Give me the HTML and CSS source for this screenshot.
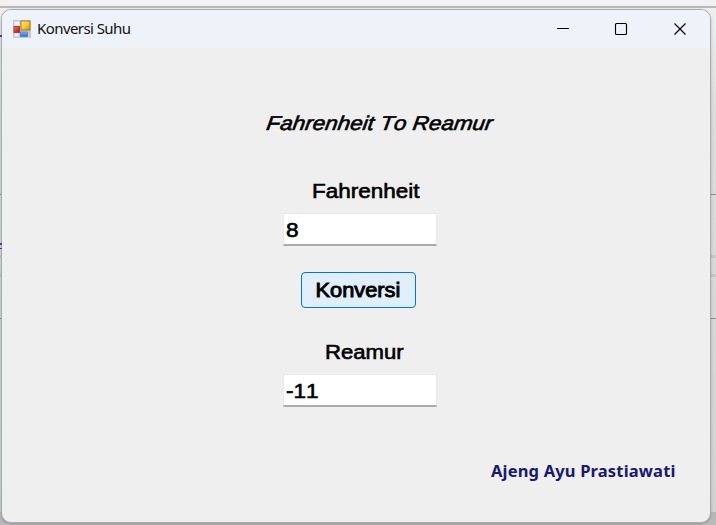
FILE: index.html
```
<!DOCTYPE html>
<html lang="id">
<head>
<meta charset="utf-8">
<title>Konversi Suhu</title>
<link rel="stylesheet" href="styles.css">
</head>
<body>
<div class="backdrop">
  <i class="rule top"></i><i class="rule upper"></i><i class="band first"></i><i class="band second"></i><i class="rule lower"></i>
  <i class="mark a"></i><i class="mark b"></i><i class="mark c"></i><i class="floor"></i>
</div>
<main class="window">
  <header class="titlebar">
    <svg class="app-icon" width="18" height="18" viewBox="0 0 18 18">
      <defs>
        <linearGradient id="gold" x2="1" y2="1"><stop stop-color="#ffe88a"/><stop offset=".55" stop-color="#f8c828"/><stop offset="1" stop-color="#c89000"/></linearGradient>
        <linearGradient id="red" x2="1" y2="1"><stop stop-color="#e87868"/><stop offset="1" stop-color="#a81410"/></linearGradient>
        <linearGradient id="blue" x2="0" y2="1"><stop stop-color="#82b2ff"/><stop offset="1" stop-color="#2866d8"/></linearGradient>
      </defs>
      <rect width="18" height="18" fill="#c5c8cd"/>
      <path d="M1.5 1.5h5v4h-5zM1.5 13.5h4v3h-4z" fill="#f3f5f8"/>
      <rect x="8" y="1" width="9" height="9" fill="url(#gold)" stroke="#a87a20"/>
      <rect x="1" y="6.5" width="5.5" height="6" fill="url(#red)" stroke="#a83028" stroke-width=".8"/>
      <rect x="7.5" y="12" width="7" height="4.5" fill="url(#blue)" stroke="#4a78c8" stroke-width=".7"/>
    </svg>
    <h1 class="caption">Konversi Suhu</h1>
    <div class="controls">
      <svg width="58" height="38" viewBox="0 0 58 38"><path d="M22 18.5h12"/></svg>
      <svg width="58" height="38" viewBox="0 0 58 38"><rect x="22.5" y="13.5" width="11" height="11" rx="1"/></svg>
      <svg width="58" height="38" viewBox="0 0 58 38"><path d="M23.5 13.5l11 11m0-11l-11 11"/></svg>
    </div>
  </header>
  <form class="form">
    <h2 class="heading">Fahrenheit To Reamur</h2>
    <div class="label fahrenheit">Fahrenheit</div>
    <div class="field eight"><span>8</span></div>
    <button class="convert" type="button"><span>Konversi</span></button>
    <div class="label reamur">Reamur</div>
    <div class="field result"><span>-11</span></div>
    <div class="author">Ajeng Ayu Prastiawati</div>
  </form>
</main>
</body>
</html>
```

FILE: styles.css
```
* { box-sizing: border-box; }
body { margin: 0; width: 716px; height: 525px; overflow: hidden; padding: 9px 5px 2px 1px; background: #ededed; font-family: "Liberation Sans", Arial, sans-serif; color: #000; }
.backdrop { position: absolute; inset: 0; background: linear-gradient(#f2f2f2 0, #eeeeee 10px, #dddddd 110px, #d2d2d2 525px); }
.backdrop i { position: absolute; left: 0; width: 100%; }
.rule { height: 1px; background: #8c8c8c; }
.rule.top { top: 6px; height: 2px; background: #b8b8b8; }
.rule.upper { top: 194px; }
.rule.lower { top: 318px; }
.band { height: 3px; background: #c8c8c8; }
.band.first { top: 255px; }
.band.second { top: 274px; }
.backdrop .mark { width: 2px; height: 2px; background: #5427d8; z-index: 2; }
.mark.a { top: 35px; }
.mark.b { top: 243px; }
.mark.c { top: 248px; height: 1px; }
.floor { top: 512px; height: 13px; background: #b9b9bb; }
.window { position: relative; width: 710px; height: 514px; border: 1px solid #aaabad; border-radius: 10px; overflow: hidden; background: #efefef; box-shadow: 0 1px 3px #0003; }
.titlebar { display: flex; align-items: center; height: 38px; padding: 0 1px 0 11px; background: #eef3fa; }
.caption { margin: -2px 0 0 6px; font: 400 15px/20px "Noto Sans", sans-serif; letter-spacing: -.58px; color: #111; }
.controls { display: flex; margin-left: auto; }
.controls svg { fill: none; stroke: #000; stroke-width: 1.15; }
.form { display: flex; flex-direction: column; align-items: flex-start; font-kerning: none; -webkit-text-stroke: .6px #000; }
.heading { margin: 63px 0 0 264px; font-size: 20px; line-height: 24px; font-weight: 400; font-style: italic; white-space: nowrap; transform: scaleX(1.123) skewX(-7deg); transform-origin: 0 75%; }
.label { font-size: 20px; line-height: 24px; transform: scaleX(1.125); transform-origin: 0 50%; }
.fahrenheit { margin: 44px 0 0 310px; }
.field { width: 154px; height: 33px; margin-left: 281px; padding: 4px 2px; border: 1px solid #e8e8e8; border-bottom: 2px solid #acacac; background: #fff; font-size: 20px; line-height: 24px; }
.field span { display: inline-block; transform: scaleX(1.13); transform-origin: 0 50%; }
.eight { margin-top: 10px; }
.convert { width: 115px; height: 36px; margin: 26px 0 0 299px; padding: 0 2px 0 0; border: 1px solid #0078d4; border-radius: 4px; background: #e0eef9; color: #000; font: 400 20px/24px "Liberation Sans", Arial, sans-serif; font-kerning: none; -webkit-text-stroke: .9px #000; }
.convert span { display: inline-block; transform: scaleX(1.09); }
.reamur { margin: 32px 0 0 323px; transform: scaleX(1.105); }
.result { margin-top: 10px; }
.author { margin: 53px 0 0 489px; font: 700 16.5px/22px "Noto Sans", sans-serif; letter-spacing: .17px; color: #191970; white-space: nowrap; -webkit-text-stroke: 0; }
```
